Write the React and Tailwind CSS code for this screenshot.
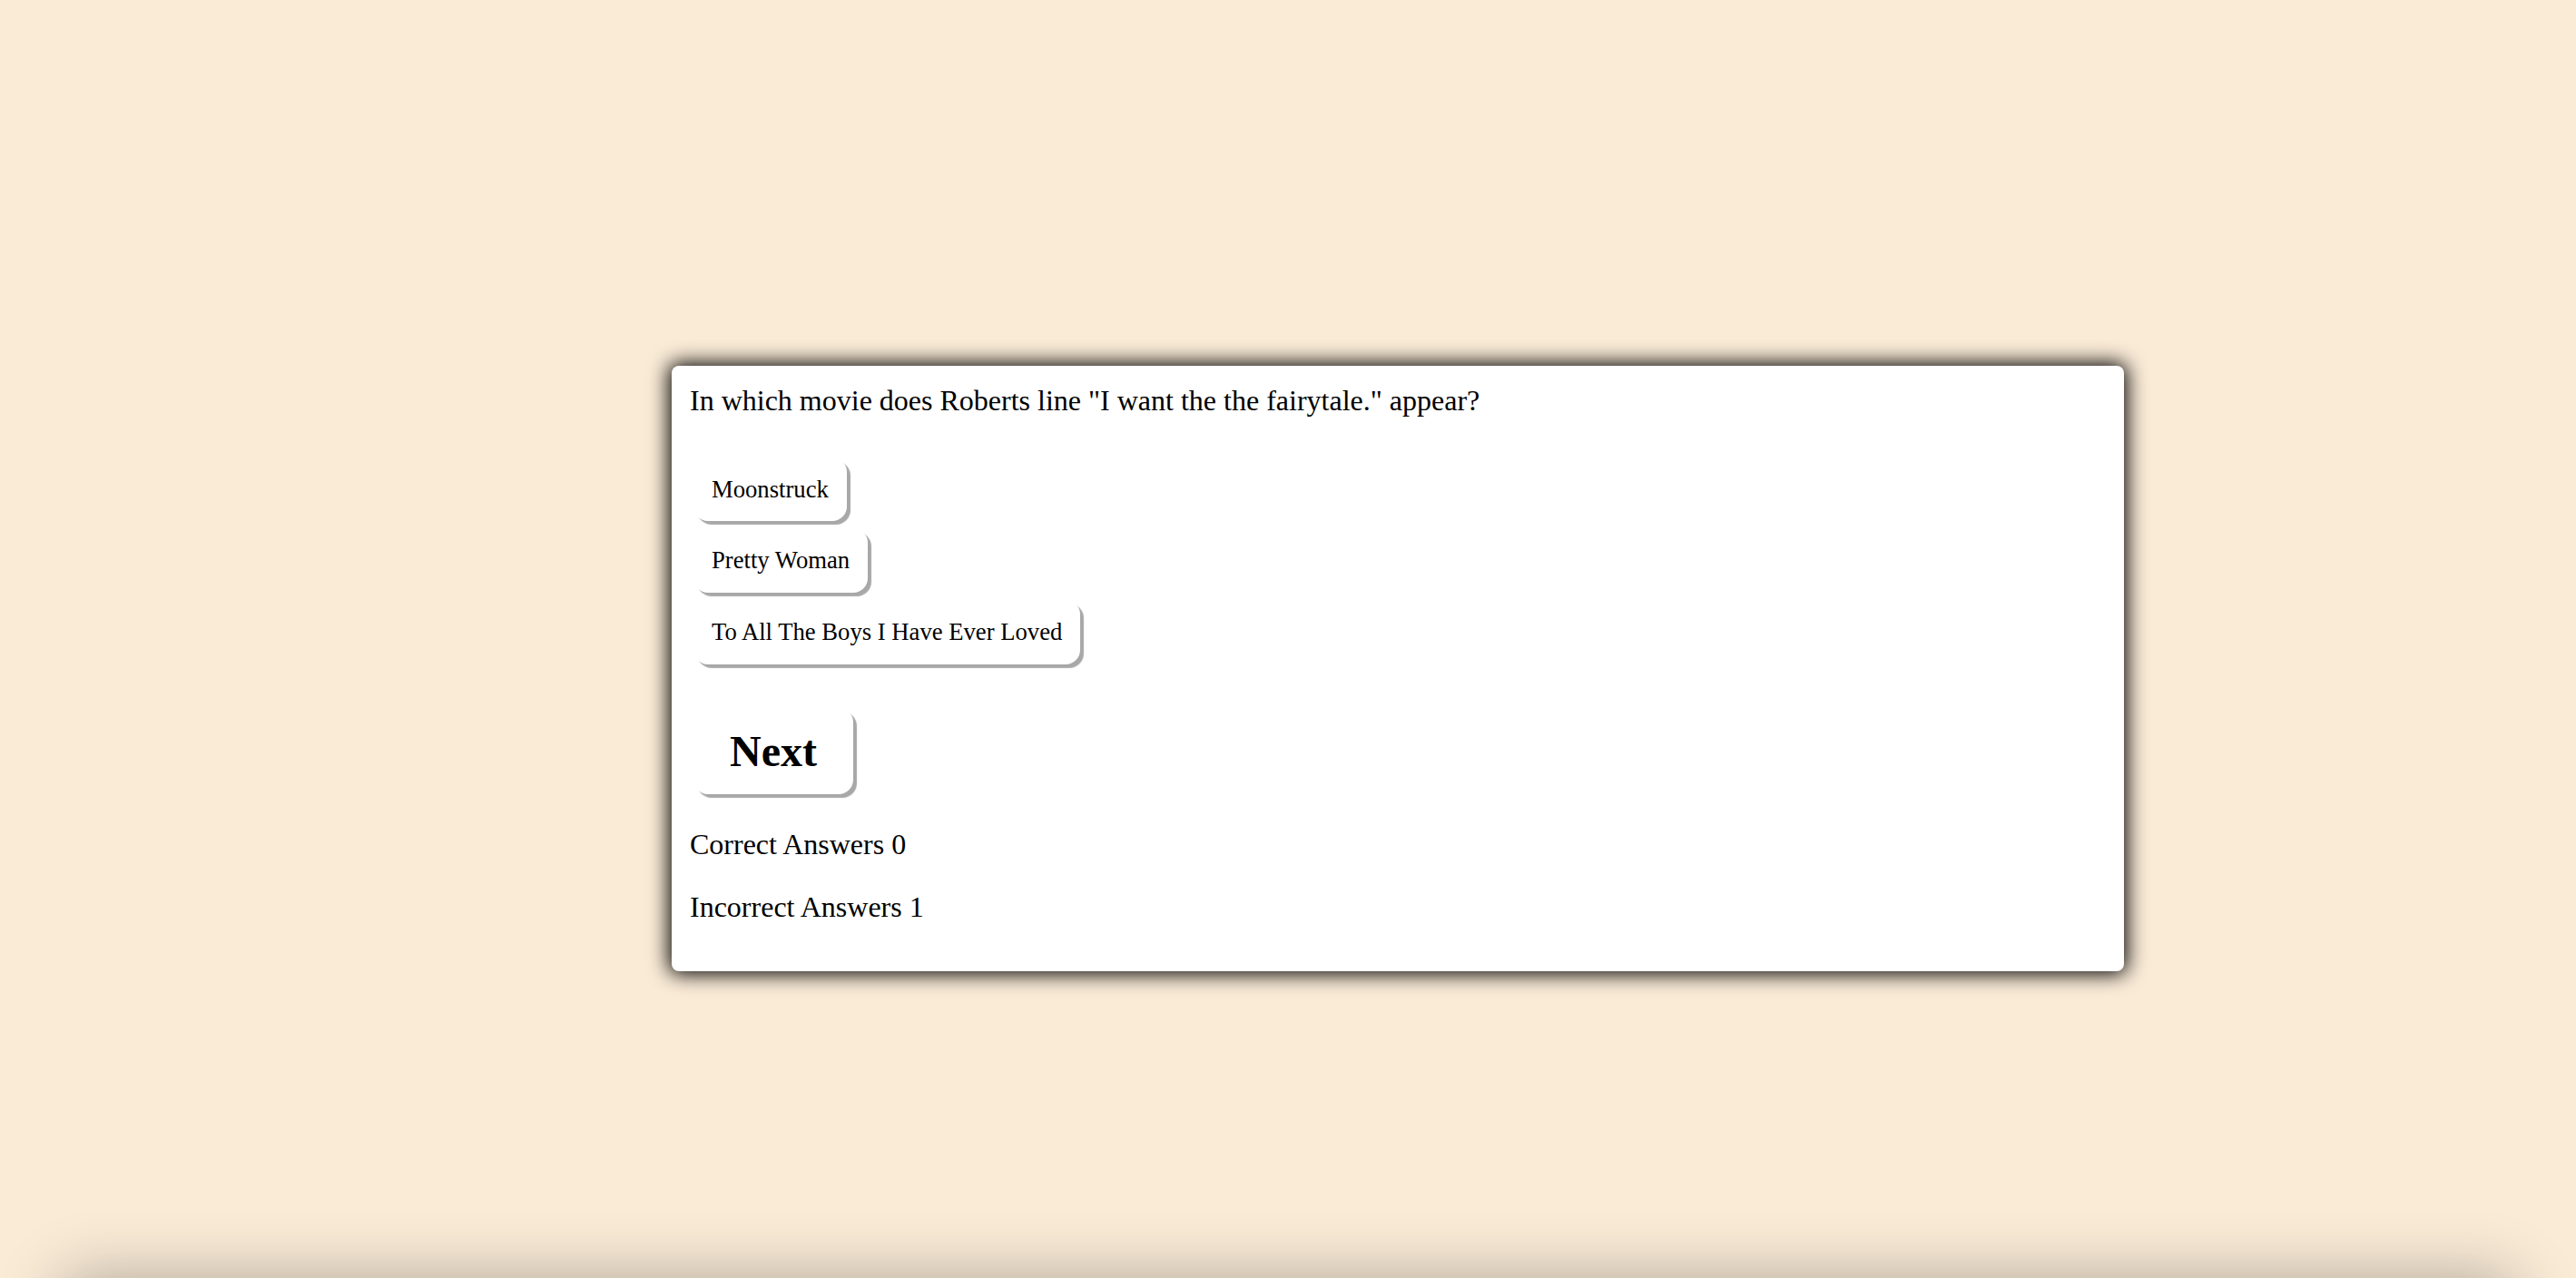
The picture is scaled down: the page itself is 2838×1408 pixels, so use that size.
import React, { useState } from 'react';

const answers = ['Moonstruck', 'Pretty Woman', 'To All The Boys I Have Ever Loved'];

export default function App() {
  const [correct] = useState(0);
  const [incorrect] = useState(1);

  return (
    <div className="bg-[#faebd7] font-['Liberation_Serif',serif] text-black overflow-hidden">
      <div className="h-[1408px] pt-[403px] pl-[740px]">
        <div className="w-[1600px] bg-white rounded-[8px] shadow-[0_0_22px_3px_#000] p-[20px]">
          <div className="text-[32px] leading-[1.15]">
            In which movie does Roberts line "I want the the fairytale." appear?
          </div>
          <div className="flex flex-col items-start mt-[40px]">
            {answers.map(a => (
              <button
                key={a}
                className="m-[4px] bg-white rounded-[16px] px-[20px] py-[20px] text-[26.67px] leading-[1.15] shadow-[4px_4px_1px_#a8a8a8]"
              >
                {a}
              </button>
            ))}
          </div>
          <button className="mt-[44px] m-[4px] bg-white rounded-[16px] px-[40px] py-[20px] text-[48px] font-bold leading-[1.15] shadow-[4px_4px_1px_#a8a8a8]">
            Next
          </button>
          <p className="mt-[33px] text-[32px] leading-[1.15]">Correct Answers {correct}</p>
          <p className="my-[32px] text-[32px] leading-[1.15]">Incorrect Answers {incorrect}</p>
        </div>
      </div>
      <div className="mx-[70px] h-[120px] bg-[#faebd7] shadow-[0_0_70px_rgba(0,0,0,0.3)]"></div>
    </div>
  );
}
